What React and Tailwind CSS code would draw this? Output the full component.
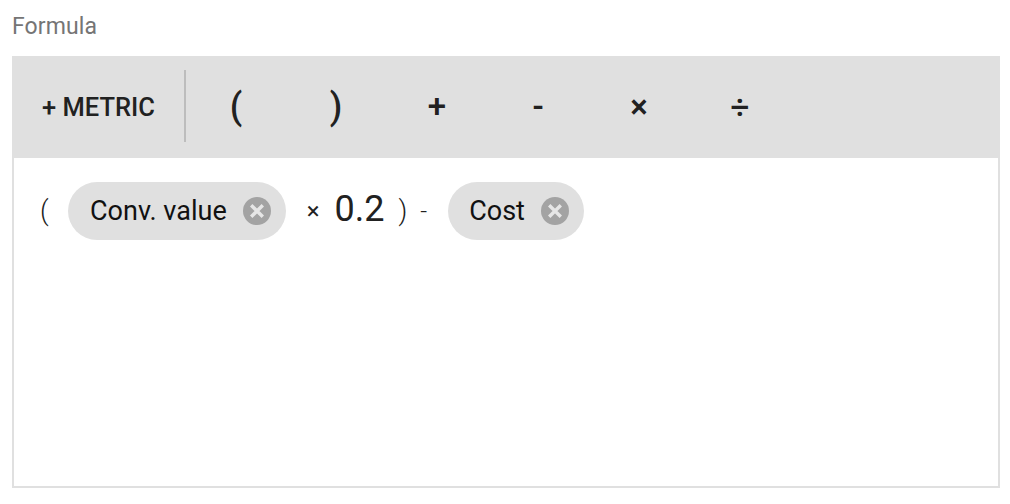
import React from 'react';

const ChipClose = () => (
  <svg width="28" height="28" viewBox="0 0 28 28" className="shrink-0">
    <circle cx="14" cy="14" r="14" fill="#a3a3a3" />
    <path d="M8.2 8.2 L19.8 19.8 M19.8 8.2 L8.2 19.8" stroke="#e6e6e6" strokeWidth="3.4" />
  </svg>
);

const Chip = ({ label, className }) => (
  <div className={`flex h-[58px] items-center rounded-[29px] bg-[#e0e0e0] pr-[15px] text-[27px] text-[#111111] ${className}`}>
    <span className="mr-[16px]">{label}</span>
    <ChipClose />
  </div>
);

const OpButton = ({ label, className }) => (
  <button className={`flex h-[58px] items-center justify-center text-[#212121] font-medium ${className}`}>{label}</button>
);

export default function App() {
  return (
    <div className="h-[504px] w-[1010px] bg-white px-[12px] font-['Roboto',sans-serif]">
      <div className="pt-[13px] text-[23px] leading-[28px] tracking-[0.1px] text-[#757575]">Formula</div>
      <div className="mt-[15px] h-[432px] w-[988px] border-2 border-t-0 border-[#e0e0e0]">
        <div className="-mx-[2px] flex h-[102px] items-center bg-[#e0e0e0]">
          <div className="w-[172px] pl-[30px] text-[25.5px] font-medium text-[#212121]">+ METRIC</div>
          <div className="mb-[2px] h-[72px] w-[2px] bg-[#bdbdbd]" />
          <OpButton label="(" className="w-[100px] text-[36px]" />
          <OpButton label=")" className="w-[100px] text-[36px]" />
          <OpButton label="+" className="w-[102px] text-[33px]" />
          <OpButton label="-" className="w-[100px] text-[33px]" />
          <OpButton label="×" className="w-[102px] text-[33px]" />
          <OpButton label="÷" className="w-[100px] text-[33px]" />
        </div>
        <div className="mt-[24px] flex h-[58px] items-center pl-[26px] text-[#212121]">
          <span className="w-[28px] text-[27px] font-light">(</span>
          <Chip label="Conv. value" className="pl-[22px]" />
          <span className="ml-[21px] text-[24px]">×</span>
          <span className="ml-[15px] mb-[4px] text-[36px] text-[#212121]">0.2</span>
          <span className="ml-[14px] text-[27px] font-light">)</span>
          <span className="ml-[13px] text-[24px] font-light">-</span>
          <Chip label="Cost" className="ml-[21px] pl-[21px]" />
        </div>
      </div>
    </div>
  );
}
